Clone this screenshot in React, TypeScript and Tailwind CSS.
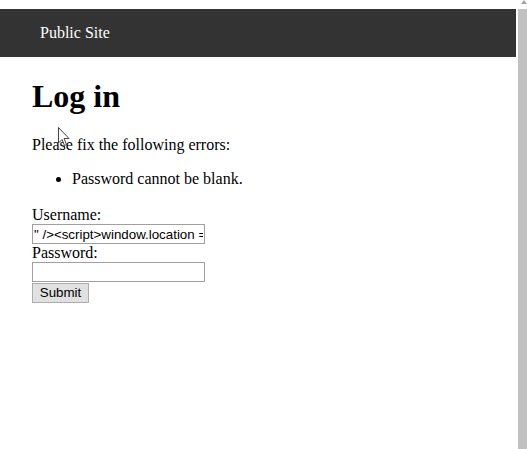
export default function App() {
  return (
    <div className="relative flex w-[527px] h-[449px] overflow-hidden bg-white text-black" style={{ fontFamily: '"Liberation Serif", "Times New Roman", serif' }}>
      <div className="w-[516px] pt-[9px]">
        <header className="h-[48px] bg-[#333333] flex items-center pl-10">
          <span className="text-white text-[16px] leading-[18px]">Public Site</span>
        </header>

        <main className="px-8">
          <h1 className="mt-[21px] text-[32px] leading-[37px] font-bold">Log in</h1>
          <p className="mt-[21px] text-[16px] leading-[18px]">Please fix the following errors:</p>
          <ul className="mt-4 pl-10 list-disc text-[16px] leading-[18px]">
            <li>Password cannot be blank.</li>
          </ul>

          <form className="mt-[17px] flex flex-col items-start text-[16px]">
            <label className="leading-[19px]">Username:</label>
            <input
              readOnly
              value={'" /><script>window.location = "http://evil.example/"</script>'}
              className="w-[173px] h-[20px] border border-[#a0a0a0] px-[1px] text-[13.33px] text-black outline-none"
              style={{ fontFamily: '"Liberation Sans", Arial, sans-serif' }}
            />
            <label className="leading-[18px]">Password:</label>
            <input
              type="password"
              readOnly
              className="w-[173px] h-[20px] border border-[#a0a0a0] px-[1px] text-[13.33px] outline-none"
            />
            <button
              type="button"
              className="mt-[1px] w-[57px] h-[20px] border border-[#adadad] bg-[#e1e1e1] text-[13.33px] leading-[18px] text-black"
              style={{ fontFamily: '"Liberation Sans", Arial, sans-serif' }}
            >
              Submit
            </button>
          </form>
        </main>
      </div>

      <div className="w-[11px] relative">
        <svg className="absolute left-[5px] top-0" width="6" height="4" viewBox="0 0 6 4">
          <path d="M0 4 L3 0 L6 4 Z" fill="#a3a3a3" />
        </svg>
        <div className="absolute left-[2px] right-0 top-[9px] bottom-0 bg-[#c1c1c1]" />
      </div>

      <svg className="absolute left-[58px] top-[127px]" width="13" height="20" viewBox="0 0 13 20">
        <path d="M0.5 0.5 L0.5 16 L4 12.5 L6.5 18.5 L8.5 17.5 L6 11.5 L11 11.5 Z" fill="white" stroke="#444" strokeWidth="1" strokeLinejoin="miter" />
      </svg>
    </div>
  );
}
